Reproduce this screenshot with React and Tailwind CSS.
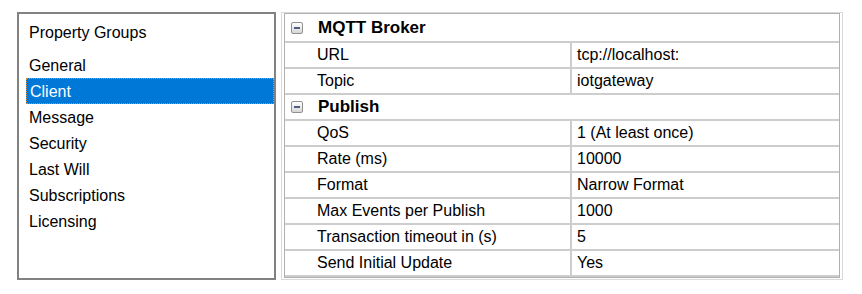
import React from 'react';

const groups = ['General', 'Client', 'Message', 'Security', 'Last Will', 'Subscriptions', 'Licensing'];

const sections = [
  {
    title: 'MQTT Broker',
    rows: [
      ['URL', 'tcp://localhost:'],
      ['Topic', 'iotgateway'],
    ],
  },
  {
    title: 'Publish',
    rows: [
      ['QoS', '1 (At least once)'],
      ['Rate (ms)', '10000'],
      ['Format', 'Narrow Format'],
      ['Max Events per Publish', '1000'],
      ['Transaction timeout in (s)', '5'],
      ['Send Initial Update', 'Yes'],
    ],
  },
];

const Expander = () => (
  <div className="w-[12px] h-[12px] rounded-[2px] border border-[#909090] bg-linear-to-b from-white to-[#d6d6d6] flex items-center justify-center">
    <div className="w-[6px] h-[2px] bg-[#4f5f82]" />
  </div>
);

const GroupList = ({ selected }) => (
  <div className="w-[259px] h-[268px] border-2 border-[#828282] bg-white text-[16px] text-black">
    <div className="h-[26px] mt-[6px] pl-[10px] flex items-center">Property Groups</div>
    <div className="mt-[6px]">
      {groups.map((g) => (
        <div
          key={g}
          className={`h-[26px] ml-[7px] pl-[3px] flex items-center ${
            g === selected ? 'bg-[#0078d7] text-white border border-dotted border-[#d98a3a]' : ''
          }`}
        >
          <span className="pt-[1px]">{g}</span>
        </div>
      ))}
    </div>
  </div>
);

const PropertyGrid = () => (
  <div className="w-[562px] h-[268px] border border-[#d9d9d9] pl-[2px] pr-[2px] pb-[1px] bg-white">
    <div className="h-full border border-[#b0b0b0] border-b-[2px] text-[16px] text-black">
      {sections.map((s, i) => (
        <div key={s.title}>
          <div className={`${i === 0 ? 'h-[27px]' : 'h-[26px] border-t-2'} border-[#cdcdcd] flex items-center`}>
            <div className="w-[33px] pl-[6px] flex items-center">
              <Expander />
            </div>
            <span className="font-bold text-[17px]">{s.title}</span>
          </div>
          {s.rows.map(([label, value]) => (
            <div key={label} className="h-[26px] border-t-2 border-[#cdcdcd] flex">
              <div className="w-[285px] pl-[32px] flex items-center">{label}</div>
              <div className="w-[2px] bg-[#cdcdcd]" />
              <div className="flex-1 pl-[5px] flex items-center">{value}</div>
            </div>
          ))}
        </div>
      ))}
      <div className="h-[2px] bg-[#cdcdcd]" />
    </div>
  </div>
);

export default function App() {
  return (
    <div className="w-[862px] h-[294px] bg-white pl-[17px] pt-[12px] flex gap-[5px] font-['Liberation_Sans',Arial,sans-serif]">
      <GroupList selected="Client" />
      <PropertyGrid />
    </div>
  );
}
